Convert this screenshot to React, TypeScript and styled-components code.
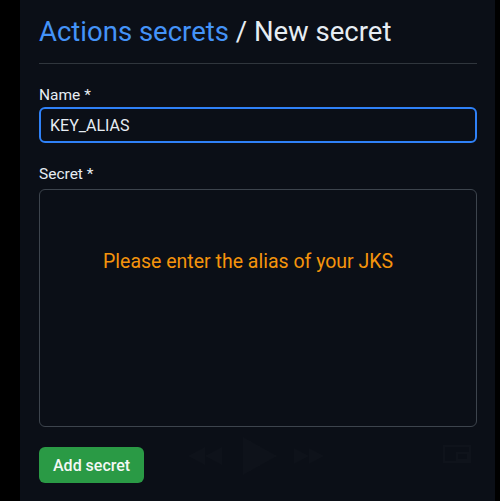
import { FC } from "react";
import styled, { createGlobalStyle } from "styled-components";

const GlobalStyle = createGlobalStyle`
  html, body {
    margin: 0;
    padding: 0;
    background: #000;
  }
  body {
    font-family: Roboto, "Liberation Sans", sans-serif;
  }
`;

const App: FC = () => (
  <>
    <GlobalStyle />
    <Screen>
      <Gutter />
      <Panel>
        <Title>
          <Crumb>Actions secrets</Crumb> / New secret
        </Title>

        <Form>
          <Label $gap={2}>Name *</Label>
          <Input readOnly value="KEY_ALIAS" />

          <Label $gap={5} $top={21}>
            Secret *
          </Label>
          <SecretBox>
            <Hint>Please enter the alias of your JKS</Hint>
          </SecretBox>

          <Button>Add secret</Button>
        </Form>

        <PlayerControls>
          <Control style={{ left: 168, top: 447 }} width={34} height={18} viewBox="0 0 34 18">
            <path d="M17 0 L17 18 L0 9 Z M34 0 L34 18 L17 9 Z" />
          </Control>
          <Control style={{ left: 223, top: 437 }} width={34} height={38} viewBox="0 0 34 38">
            <path d="M0 0 L34 19 L0 38 Z" />
          </Control>
          <Control style={{ left: 274, top: 448 }} width={30} height={16} viewBox="0 0 30 16">
            <path d="M0 0 L15 8 L0 16 Z M15 0 L30 8 L15 16 Z" />
          </Control>
          <Control style={{ left: 423, top: 445 }} width={28} height={18} viewBox="0 0 28 18">
            <path
              d="M1 1 H27 V17 H1 Z M14 8 H25 V15 H14 Z"
              fill="none"
              stroke="rgba(255,255,255,0.018)"
              strokeWidth="2"
            />
          </Control>
        </PlayerControls>
      </Panel>
      <EdgeStrip />
    </Screen>
  </>
);

export default App;

const Screen = styled.div`
  display: flex;
  width: 500px;
  height: 501px;
  background: #000;
  overflow: hidden;
`;

const Gutter = styled.div`
  width: 20px;
  flex-shrink: 0;
  background: #000;
`;

const Panel = styled.div`
  position: relative;
  flex: 1;
  padding: 14px 18px 0 19px;
  background: #0b0f17;
  box-sizing: border-box;
`;

const EdgeStrip = styled.div`
  width: 5px;
  height: 465px;
  flex-shrink: 0;
  background: #000;
`;

const Title = styled.h1`
  margin: 0;
  padding-bottom: 13px;
  border-bottom: 1px solid #30363d;
  font-size: 27.5px;
  line-height: 36px;
  font-weight: 400;
  color: #e6edf3;
`;

const Crumb = styled.span`
  color: #4493f8;
`;

const Form = styled.div`
  display: flex;
  flex-direction: column;
  align-items: flex-start;
  padding-top: 21px;
`;

const Label = styled.label<{ $gap: number; $top?: number }>`
  margin-top: ${(p) => p.$top ?? 0}px;
  margin-bottom: ${(p) => p.$gap}px;
  font-size: 15.5px;
  line-height: 20px;
  color: #e6edf3;
`;

const Input = styled.input`
  width: 100%;
  height: 36px;
  box-sizing: border-box;
  padding: 0 9px;
  border: 2px solid #2f81f7;
  border-radius: 6px;
  background: #0b0f17;
  color: #e6edf3;
  font-family: Roboto, "Liberation Sans", sans-serif;
  font-size: 16px;
  outline: none;
`;

const SecretBox = styled.div`
  width: 100%;
  height: 238px;
  box-sizing: border-box;
  padding: 60px 0 0 63px;
  border: 1px solid #3d444d;
  border-radius: 6px;
`;

const Hint = styled.div`
  font-size: 19.5px;
  line-height: 24px;
  color: #f5940c;
`;

const Button = styled.button`
  margin-top: 20px;
  height: 36px;
  padding: 0 14px;
  border: none;
  border-radius: 6px;
  background: #2a9a45;
  color: #f4f8f5;
  font-family: Roboto, "Liberation Sans", sans-serif;
  font-size: 16px;
  font-weight: 500;
`;

const PlayerControls = styled.div`
  position: absolute;
  inset: 0;
  pointer-events: none;
`;

const Control = styled.svg`
  position: absolute;
  fill: rgba(255, 255, 255, 0.015);
`;
